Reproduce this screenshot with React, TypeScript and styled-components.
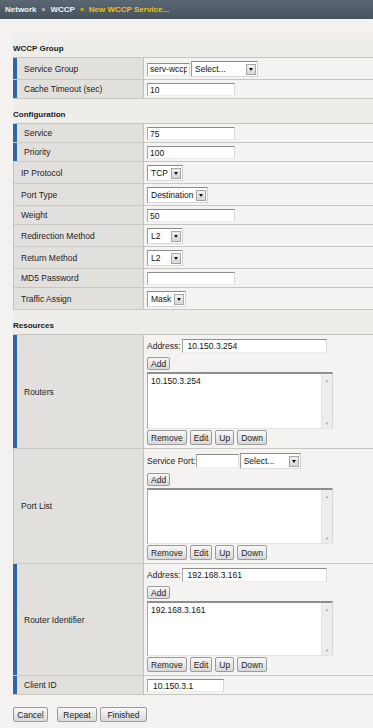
import React from "react";
import styled, { createGlobalStyle } from "styled-components";

const GlobalStyle = createGlobalStyle`
  html, body {
    margin: 0;
    padding: 0;
  }
  body {
    background: #f3f2f0;
    font-family: "Liberation Sans", Arial, sans-serif;
    font-size: 8.5px;
    color: #1e1e1e;
    overflow: hidden;
  }
`;

const TopBar = styled.div`
  height: 19px;
  background: linear-gradient(#5b6773, #46525e);
  display: flex;
  align-items: center;
  padding-left: 5px;
  font-weight: bold;
  font-size: 8px;
  color: #eef1f4;
`;

const Crumb = styled.span<{ $active?: boolean }>`
  color: ${(p) => (p.$active ? "#f2c300" : "#eef1f4")};
`;

const Sep = styled.span<{ $active?: boolean }>`
  font-size: 7px;
  margin: 0 5px;
  color: ${(p) => (p.$active ? "#f2c300" : "#c9d0d6")};
`;

const Main = styled.div`
  padding: 14px 0 0 13px;
`;

const Heading = styled.div`
  height: 24px;
  box-sizing: border-box;
  display: flex;
  align-items: flex-end;
  padding-bottom: 2px;
  line-height: 12px;
  font-size: 8px;
  font-weight: bold;
  color: #1a1a1a;
  background: #eeede9;
`;

const Table = styled.div`
  border-top: 1px solid #c6c4c0;
`;

const Row = styled.div`
  display: flex;
  border-bottom: 1px solid #c9c7c3;
`;

const Label = styled.div<{ $req?: boolean }>`
  width: 131px;
  flex: none;
  box-sizing: border-box;
  display: flex;
  align-items: center;
  padding-left: 7px;
  background: #e2e0dc;
  color: #222;
  border-left: ${(p) => (p.$req ? "4px solid #2f67a3" : "1px solid #c3c1bd")};
  border-right: 1px solid #c3c1bd;
`;

const Value = styled.div`
  flex: 1;
  display: flex;
  align-items: center;
  padding: 3px 3px 2px;
  background: #f4f3f1;
`;

const StackValue = styled(Value)`
  flex-direction: column;
  align-items: flex-start;
  padding: 4px 3px 3px;
`;

const TextBox = styled.input<{ $w: number; $h?: number; $pad?: number }>`
  box-sizing: border-box;
  width: ${(p) => p.$w}px;
  height: ${(p) => p.$h ?? 13}px;
  margin: 0;
  padding: 0 ${(p) => p.$pad ?? 2}px;
  font: 8.5px "Liberation Sans", Arial, sans-serif;
  color: #111;
  background: #fff;
  border: 1px solid;
  border-color: #8c8c8c #d8d8d8 #ececec #a6a6a6;
  outline: none;
`;

const SelectBox = styled.div<{ $w: number; $gap?: number }>`
  box-sizing: border-box;
  width: ${(p) => p.$w}px;
  height: 16px;
  margin-left: ${(p) => p.$gap ?? 0}px;
  display: flex;
  align-items: center;
  justify-content: space-between;
  padding: 0 1px 0 3px;
  background: #fff;
  color: #111;
  border: 1px solid;
  border-color: #8a8a8a #cfcfcf #dadada #9a9a9a;
  white-space: nowrap;
`;

const ArrowBtn = styled.span`
  width: 10px;
  height: 11px;
  box-sizing: border-box;
  display: flex;
  align-items: center;
  justify-content: center;
  background: linear-gradient(#f2f2f2, #d6d6d6);
  border: 1px solid #a6a6a6;

  &::after {
    content: "";
    border-left: 2.5px solid transparent;
    border-right: 2.5px solid transparent;
    border-top: 3px solid #111;
  }
`;

const Btn = styled.button<{ $w?: number }>`
  box-sizing: border-box;
  height: 15px;
  ${(p) => (p.$w ? `width: ${p.$w}px;` : "")}
  margin: 0;
  padding: 0 3px;
  font: 8.5px "Liberation Sans", Arial, sans-serif;
  color: #222;
  background: linear-gradient(#f8f8f8, #d8d8d8);
  border: 1px solid #9b9b9b;
  border-radius: 2px;
`;

const Line = styled.div`
  display: flex;
  align-items: center;
`;

const FieldName = styled.span<{ $gap?: number }>`
  margin-right: ${(p) => p.$gap ?? 0}px;
`;

const AddBtn = styled(Btn)`
  margin-top: 4px;
  height: 13px;
`;

const ListBox = styled.div<{ $h: number }>`
  margin-top: 2px;
  width: 186px;
  height: ${(p) => p.$h}px;
  box-sizing: border-box;
  display: flex;
  background: #fff;
  border: 1px solid;
  border-top: 2px solid #8e8e8e;
  border-color: #8e8e8e #d6d6d6 #e4e4e4 #a8a8a8;
`;

const ListItems = styled.div`
  flex: 1;
  padding: 2px 3px;
  line-height: 11px;
  color: #111;
`;

const ScrollTrack = styled.div`
  width: 11px;
  display: flex;
  flex-direction: column;
  justify-content: space-between;
  align-items: center;
  background: #ededed;
  border-left: 1px solid #e2e2e2;
  color: #a0a0a0;
  font-size: 4px;
  padding: 4px 0 2px;
  box-sizing: border-box;
`;

const ButtonRow = styled.div`
  display: flex;
  gap: 3px;
  margin-top: 1px;
`;

const Footer = styled.div`
  display: flex;
  margin-top: 12px;
  padding-left: 13px;
`;

const FooterBtn = styled(Btn)<{ $space: number }>`
  margin-right: ${(p) => p.$space}px;
`;

const Select: React.FC<{ w: number; text: string; gap?: number }> = ({ w, text, gap }) => (
  <SelectBox $w={w} $gap={gap}>
    <span>{text}</span>
    <ArrowBtn />
  </SelectBox>
);

const ListEditor: React.FC<{ top: React.ReactNode; items: string[]; h: number }> = ({
  top,
  items,
  h,
}) => (
  <>
    <Line>{top}</Line>
    <AddBtn>Add</AddBtn>
    <ListBox $h={h}>
      <ListItems>
        {items.map((i) => (
          <div key={i}>{i}</div>
        ))}
      </ListItems>
      <ScrollTrack>
        <span>▲</span>
        <span>▼</span>
      </ScrollTrack>
    </ListBox>
    <ButtonRow>
      <Btn>Remove</Btn>
      <Btn>Edit</Btn>
      <Btn>Up</Btn>
      <Btn>Down</Btn>
    </ButtonRow>
  </>
);

interface ConfigRow {
  label: string;
  req?: boolean;
  input?: string;
  select?: { text: string; w: number };
}

const configRows: ConfigRow[] = [
  { label: "Service", req: true, input: "75" },
  { label: "Priority", req: true, input: "100" },
  { label: "IP Protocol", select: { text: "TCP", w: 36 } },
  { label: "Port Type", select: { text: "Destination", w: 61 } },
  { label: "Weight", input: "50" },
  { label: "Redirection Method", select: { text: "L2", w: 36 } },
  { label: "Return Method", select: { text: "L2", w: 36 } },
  { label: "MD5 Password", input: "" },
  { label: "Traffic Assign", select: { text: "Mask", w: 39 } },
];

export default function App() {
  return (
    <>
      <GlobalStyle />
      <TopBar>
        <Crumb>Network</Crumb>
        <Sep>»</Sep>
        <Crumb>WCCP</Crumb>
        <Sep $active>»</Sep>
        <Crumb $active>New WCCP Service...</Crumb>
      </TopBar>

      <Main>
        {/* WCCP Group */}
        <Heading>WCCP Group</Heading>
        <Table>
          <Row>
            <Label $req>Service Group</Label>
            <Value>
              <TextBox $w={43} readOnly defaultValue="serv-wccp" />
              <Select w={67} text="Select..." gap={1} />
            </Value>
          </Row>
          <Row>
            <Label $req>Cache Timeout (sec)</Label>
            <Value>
              <TextBox $w={88} readOnly defaultValue="10" />
            </Value>
          </Row>
        </Table>

        {/* Configuration */}
        <Heading>Configuration</Heading>
        <Table>
          {configRows.map((r) => (
            <Row key={r.label}>
              <Label $req={r.req}>{r.label}</Label>
              <Value>
                {r.select ? (
                  <Select w={r.select.w} text={r.select.text} />
                ) : (
                  <TextBox $w={88} readOnly defaultValue={r.input} />
                )}
              </Value>
            </Row>
          ))}
        </Table>

        {/* Resources */}
        <Heading>Resources</Heading>
        <Table>
          <Row>
            <Label $req>Routers</Label>
            <StackValue>
              <ListEditor
                h={57}
                items={["10.150.3.254"]}
                top={
                  <>
                    <FieldName $gap={1}>Address:</FieldName>
                    <TextBox $w={145} $h={14} $pad={5} readOnly defaultValue="10.150.3.254" />
                  </>
                }
              />
            </StackValue>
          </Row>
          <Row>
            <Label>Port List</Label>
            <StackValue>
              <ListEditor
                h={56}
                items={[]}
                top={
                  <>
                    <FieldName>Service Port:</FieldName>
                    <TextBox $w={43} $h={14} readOnly defaultValue="" />
                    <Select w={61} text="Select..." gap={1} />
                  </>
                }
              />
            </StackValue>
          </Row>
          <Row>
            <Label $req>Router Identifier</Label>
            <StackValue>
              <ListEditor
                h={55}
                items={["192.168.3.161"]}
                top={
                  <>
                    <FieldName $gap={1}>Address:</FieldName>
                    <TextBox $w={145} $h={14} $pad={5} readOnly defaultValue="192.168.3.161" />
                  </>
                }
              />
            </StackValue>
          </Row>
          <Row>
            <Label $req>Client ID</Label>
            <Value>
              <TextBox $w={77} $pad={5} readOnly defaultValue="10.150.3.1" />
            </Value>
          </Row>
        </Table>
      </Main>

      <Footer>
        <FooterBtn $w={35} $space={9}>Cancel</FooterBtn>
        <FooterBtn $w={40} $space={3}>Repeat</FooterBtn>
        <FooterBtn $w={47} $space={0}>Finished</FooterBtn>
      </Footer>
    </>
  );
}
